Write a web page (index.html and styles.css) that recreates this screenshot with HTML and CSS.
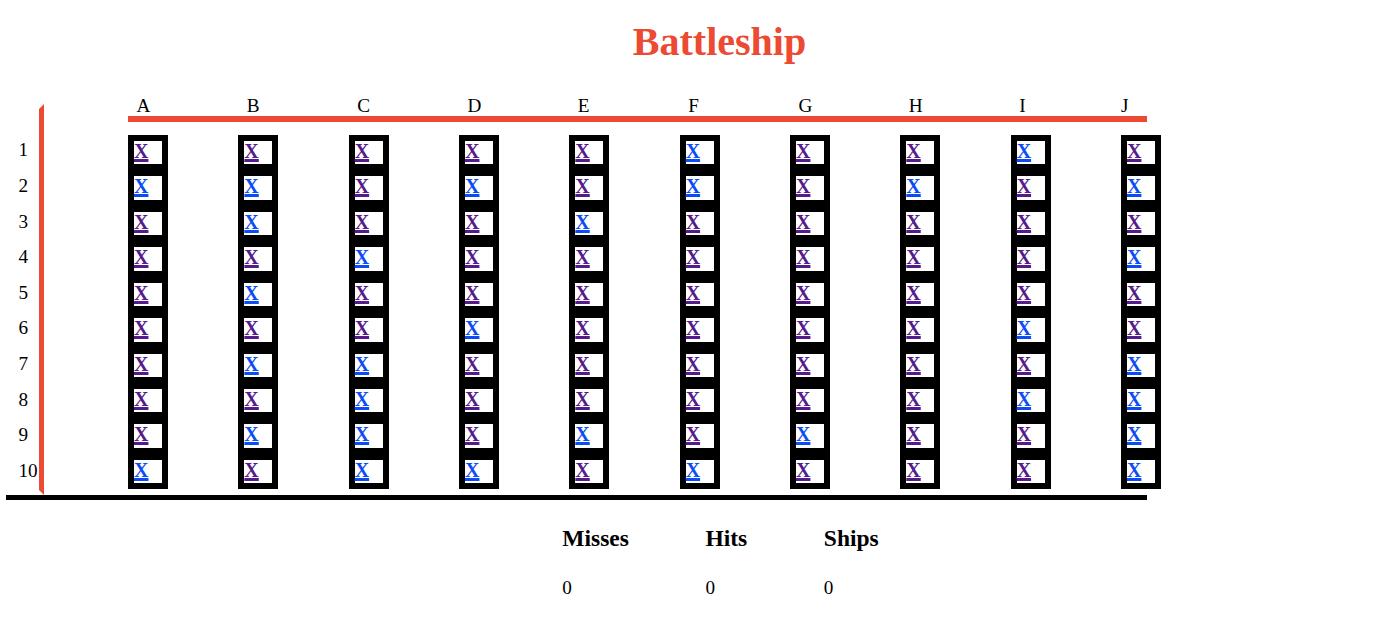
FILE: index.html
```html
<!DOCTYPE html>
<html>
<head>
<meta charset="utf-8">
<title>Battleship</title>
<link rel="stylesheet" href="styles.css">
</head>
<body>
<h1 class="title">Battleship</h1>
<div class="board">
  <div class="rows">
    <div class="row-label">1</div>
    <div class="row-label">2</div>
    <div class="row-label">3</div>
    <div class="row-label">4</div>
    <div class="row-label">5</div>
    <div class="row-label">6</div>
    <div class="row-label">7</div>
    <div class="row-label">8</div>
    <div class="row-label">9</div>
    <div class="row-label">10</div>
  </div>
  <div class="field">
    <div class="heads">
      <div class="head">A</div>
      <div class="head">B</div>
      <div class="head">C</div>
      <div class="head">D</div>
      <div class="head">E</div>
      <div class="head">F</div>
      <div class="head">G</div>
      <div class="head">H</div>
      <div class="head">I</div>
      <div class="head head-last">J</div>
    </div>
    <div class="cols">
      <div class="col">
        <div class="cell"><a href="#" class="shot v">X</a></div>
        <div class="cell"><a href="#" class="shot">X</a></div>
        <div class="cell"><a href="#" class="shot v">X</a></div>
        <div class="cell"><a href="#" class="shot v">X</a></div>
        <div class="cell"><a href="#" class="shot v">X</a></div>
        <div class="cell"><a href="#" class="shot v">X</a></div>
        <div class="cell"><a href="#" class="shot v">X</a></div>
        <div class="cell"><a href="#" class="shot v">X</a></div>
        <div class="cell"><a href="#" class="shot v">X</a></div>
        <div class="cell"><a href="#" class="shot">X</a></div>
      </div>
      <div class="col">
        <div class="cell"><a href="#" class="shot v">X</a></div>
        <div class="cell"><a href="#" class="shot">X</a></div>
        <div class="cell"><a href="#" class="shot">X</a></div>
        <div class="cell"><a href="#" class="shot v">X</a></div>
        <div class="cell"><a href="#" class="shot">X</a></div>
        <div class="cell"><a href="#" class="shot v">X</a></div>
        <div class="cell"><a href="#" class="shot">X</a></div>
        <div class="cell"><a href="#" class="shot v">X</a></div>
        <div class="cell"><a href="#" class="shot">X</a></div>
        <div class="cell"><a href="#" class="shot v">X</a></div>
      </div>
      <div class="col">
        <div class="cell"><a href="#" class="shot v">X</a></div>
        <div class="cell"><a href="#" class="shot v">X</a></div>
        <div class="cell"><a href="#" class="shot v">X</a></div>
        <div class="cell"><a href="#" class="shot">X</a></div>
        <div class="cell"><a href="#" class="shot v">X</a></div>
        <div class="cell"><a href="#" class="shot v">X</a></div>
        <div class="cell"><a href="#" class="shot">X</a></div>
        <div class="cell"><a href="#" class="shot">X</a></div>
        <div class="cell"><a href="#" class="shot">X</a></div>
        <div class="cell"><a href="#" class="shot">X</a></div>
      </div>
      <div class="col">
        <div class="cell"><a href="#" class="shot v">X</a></div>
        <div class="cell"><a href="#" class="shot">X</a></div>
        <div class="cell"><a href="#" class="shot v">X</a></div>
        <div class="cell"><a href="#" class="shot v">X</a></div>
        <div class="cell"><a href="#" class="shot v">X</a></div>
        <div class="cell"><a href="#" class="shot">X</a></div>
        <div class="cell"><a href="#" class="shot v">X</a></div>
        <div class="cell"><a href="#" class="shot v">X</a></div>
        <div class="cell"><a href="#" class="shot v">X</a></div>
        <div class="cell"><a href="#" class="shot">X</a></div>
      </div>
      <div class="col">
        <div class="cell"><a href="#" class="shot v">X</a></div>
        <div class="cell"><a href="#" class="shot v">X</a></div>
        <div class="cell"><a href="#" class="shot">X</a></div>
        <div class="cell"><a href="#" class="shot v">X</a></div>
        <div class="cell"><a href="#" class="shot v">X</a></div>
        <div class="cell"><a href="#" class="shot v">X</a></div>
        <div class="cell"><a href="#" class="shot v">X</a></div>
        <div class="cell"><a href="#" class="shot v">X</a></div>
        <div class="cell"><a href="#" class="shot">X</a></div>
        <div class="cell"><a href="#" class="shot v">X</a></div>
      </div>
      <div class="col">
        <div class="cell"><a href="#" class="shot">X</a></div>
        <div class="cell"><a href="#" class="shot">X</a></div>
        <div class="cell"><a href="#" class="shot v">X</a></div>
        <div class="cell"><a href="#" class="shot v">X</a></div>
        <div class="cell"><a href="#" class="shot v">X</a></div>
        <div class="cell"><a href="#" class="shot v">X</a></div>
        <div class="cell"><a href="#" class="shot v">X</a></div>
        <div class="cell"><a href="#" class="shot v">X</a></div>
        <div class="cell"><a href="#" class="shot v">X</a></div>
        <div class="cell"><a href="#" class="shot">X</a></div>
      </div>
      <div class="col">
        <div class="cell"><a href="#" class="shot v">X</a></div>
        <div class="cell"><a href="#" class="shot v">X</a></div>
        <div class="cell"><a href="#" class="shot v">X</a></div>
        <div class="cell"><a href="#" class="shot v">X</a></div>
        <div class="cell"><a href="#" class="shot v">X</a></div>
        <div class="cell"><a href="#" class="shot v">X</a></div>
        <div class="cell"><a href="#" class="shot v">X</a></div>
        <div class="cell"><a href="#" class="shot v">X</a></div>
        <div class="cell"><a href="#" class="shot">X</a></div>
        <div class="cell"><a href="#" class="shot v">X</a></div>
      </div>
      <div class="col">
        <div class="cell"><a href="#" class="shot v">X</a></div>
        <div class="cell"><a href="#" class="shot">X</a></div>
        <div class="cell"><a href="#" class="shot v">X</a></div>
        <div class="cell"><a href="#" class="shot v">X</a></div>
        <div class="cell"><a href="#" class="shot v">X</a></div>
        <div class="cell"><a href="#" class="shot v">X</a></div>
        <div class="cell"><a href="#" class="shot v">X</a></div>
        <div class="cell"><a href="#" class="shot v">X</a></div>
        <div class="cell"><a href="#" class="shot v">X</a></div>
        <div class="cell"><a href="#" class="shot v">X</a></div>
      </div>
      <div class="col">
        <div class="cell"><a href="#" class="shot">X</a></div>
        <div class="cell"><a href="#" class="shot v">X</a></div>
        <div class="cell"><a href="#" class="shot v">X</a></div>
        <div class="cell"><a href="#" class="shot v">X</a></div>
        <div class="cell"><a href="#" class="shot v">X</a></div>
        <div class="cell"><a href="#" class="shot">X</a></div>
        <div class="cell"><a href="#" class="shot v">X</a></div>
        <div class="cell"><a href="#" class="shot">X</a></div>
        <div class="cell"><a href="#" class="shot v">X</a></div>
        <div class="cell"><a href="#" class="shot v">X</a></div>
      </div>
      <div class="col">
        <div class="cell"><a href="#" class="shot v">X</a></div>
        <div class="cell"><a href="#" class="shot">X</a></div>
        <div class="cell"><a href="#" class="shot v">X</a></div>
        <div class="cell"><a href="#" class="shot">X</a></div>
        <div class="cell"><a href="#" class="shot v">X</a></div>
        <div class="cell"><a href="#" class="shot v">X</a></div>
        <div class="cell"><a href="#" class="shot">X</a></div>
        <div class="cell"><a href="#" class="shot">X</a></div>
        <div class="cell"><a href="#" class="shot">X</a></div>
        <div class="cell"><a href="#" class="shot">X</a></div>
      </div>
    </div>
  </div>
</div>
<div class="stats">
  <div class="stat">
    <div class="stat-name">Misses</div>
    <div class="stat-value">0</div>
  </div>
  <div class="stat">
    <div class="stat-name">Hits</div>
    <div class="stat-value">0</div>
  </div>
  <div class="stat">
    <div class="stat-name">Ships</div>
    <div class="stat-value">0</div>
  </div>
</div>
</body>
</html>
```

FILE: styles.css
```css
body {
  margin: 0;
  font-family: "Liberation Serif", "Times New Roman", serif;
  font-size: 19.2px;
  color: #000;
  background: #fff;
}

.title {
  margin: 0;
  padding: 19px 0 0 43px;
  text-align: center;
  font-size: 40px;
  line-height: 46px;
  font-weight: bold;
  color: #ec4a32;
}

.board {
  margin: 29px 0 0 6px;
  width: 1141px;
  display: flex;
  align-items: flex-end;
  border-bottom: 5px solid #000;
}

.rows {
  flex: none;
  width: 20.5px;
  padding: 23.4px 0 1.6px 12.5px;
  border-top: 5px solid #fff;
  border-bottom: 5px solid #fff;
  border-right: 5px solid #ec4a32;
}

.row-label {
  height: 35.6px;
  line-height: 35.6px;
  white-space: nowrap;
}

.field {
  flex: none;
  margin-left: 84px;
  padding-bottom: 5.7px;
}

.heads {
  display: flex;
  width: 1019px;
  height: 21px;
  padding-top: 1px;
  line-height: 21px;
  border-bottom: 6px solid #ec4a32;
}

.head {
  flex: 0 0 110.33px;
  box-sizing: border-box;
  padding-left: 8.5px;
}

.head-last {
  flex: 1 1 auto;
  padding-left: 0;
}

.cols {
  display: flex;
  gap: 70.33px;
  margin-top: 13px;
}

.col {
  display: flex;
  flex-direction: column;
}

.cell {
  width: 28px;
  height: 23.43px;
  border: 6px solid #000;
  background: #fff;
  font-size: 20px;
  font-weight: bold;
  line-height: 21.5px;
}

.shot {
  color: #0b4cf5;
  text-decoration: underline;
  text-decoration-thickness: 2.5px;
  text-underline-offset: 1px;
}

.shot.v {
  color: #551a8b;
}

.stats {
  display: flex;
  justify-content: center;
  gap: 76.6px;
  padding-left: 45px;
  margin-top: 25.3px;
}

.stat-name {
  font-size: 23.5px;
  font-weight: bold;
  line-height: 27px;
}

.stat-value {
  margin-top: 25.2px;
  line-height: 22px;
}
```
